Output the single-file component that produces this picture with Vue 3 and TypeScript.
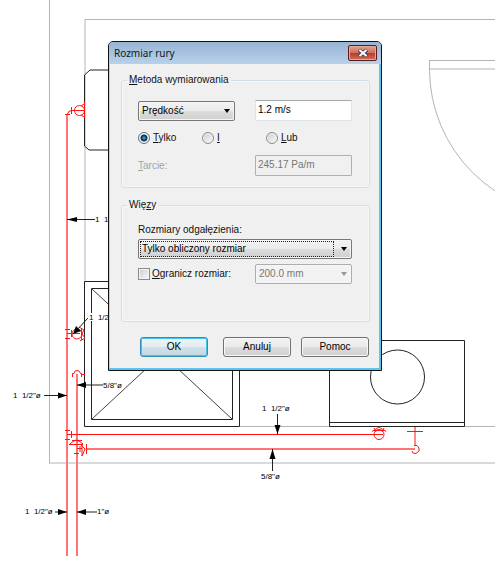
<script setup lang="ts">
import { ref } from 'vue'

interface Note {
  x: number
  y: number
  text: string
}

const notes: Note[] = [
  { x: 95, y: 222, text: '1\u00a0\u00a01/2"ø' },
  { x: 89, y: 320, text: '1\u00a0\u00a01/2"ø' },
  { x: 103, y: 388, text: '5/8"ø' },
  { x: 13, y: 398, text: '1\u00a0\u00a01/2"ø' },
  { x: 262, y: 411, text: '1\u00a0\u00a01/2"ø' },
  { x: 261, y: 479, text: '5/8"ø' },
  { x: 25, y: 514, text: '1\u00a0\u00a01/2"ø' },
  { x: 97, y: 514, text: '1"ø' }
]

const method = ref('Prędkość')
const velocity = ref('1.2 m/s')
const mode = ref('only')
const friction = ref('245.17 Pa/m')
const branch = ref('Tylko obliczony rozmiar')
const limited = ref(false)
const limit = ref('200.0 mm')
</script>

<template>
  <main class="workspace">
    <svg class="plan" aria-hidden="true">
      <g class="wall">
        <path d="M49.5 0V463" />
        <line x1="49" y1="463" x2="100%" y2="463" />
        <path d="M85 282V19.5" />
        <line x1="85" y1="19.5" x2="100%" y2="19.5" />
        <line x1="240" y1="426.5" x2="100%" y2="426.5" />
        <path d="M429.5 60V70A146 146 0 0 0 575 215M429 60.5H575M429 69H575" />
      </g>
      <g class="fixture">
        <path d="M110 70H90L84.500 75V146L89 150H110" />
        <path d="M84.500 281.500H239.500V426.500H84.500Z" />
        <path d="M91.500 288.500H232.500V419.500H91.500Z" />
        <path class="thin" d="M92 289L162 354L232 419M92 419L162 354L232 289" />
        <path d="M329.500 340.500H464.500V426.500H329.500ZM329.500 422.500H464.500" />
        <circle cx="397.500" cy="377" r="27" />
      </g>
      <g class="pipe-soft">
        <path d="M67 114V556" />
        <path d="M77 374V556" />
        <path d="M86 449H415" />
      </g>
      <g class="pipe">
        <path d="M67 434.500H383" />
        <path d="M65 114.500H70M67.500 114Q68 110.500 72 110.500H84M71.500 107V114" />
        <circle cx="79.500" cy="110.500" r="5" />
        <path d="M84.500 102V118M81 106L84 104M81 115L84 117" />
        <path d="M65 329.500H70M65 338.500H70M67 333.500H80M71.500 330V337" />
        <circle cx="77" cy="334" r="5" />
        <path d="M79 327L84 330L82 334L85 338L80 341M81.500 329V340" />
        <path d="M72.500 377V373.500H74Q74 370.500 77 370.500Q80 370.500 80.500 373.500H81.500V377M81 374.500H85" />
        <path d="M65 430.500H70M65 439.500H70M71.500 431V438" />
        <path d="M72 440.500H82M69 444.500H83M70 444Q73 441 76 440Q80 441 83 444M74 453.500H79M77 448.500H82" />
        <path d="M81 445L85 449L82 456V444M80 446V452M86.500 444V454" />
        <circle cx="379" cy="434.500" r="5" />
        <path d="M372 431.500L379 427L386 431.500M374 430.500H384M374 428L376 432M384 428L382 432" />
        <path d="M415 427V445M407 431.500H423M414 445.500H417L419 448V451L416 453.500L413 453L412 451" />
      </g>
      <g class="leader">
        <path d="M67 219.500H95M88 318L74 333M77 385H103M44 395.500H67M277.500 414V434M272.500 471V449M55 512H67M77 512H97" />
        <path class="head" d="M67 219.500L77 217V222ZM73 334L76 326L81 331ZM77 385L86 382V388ZM67 395.500L58 392.500V398.500ZM277.500 434L274.500 425H280.500ZM272.500 449L269.500 459H275.500ZM67 512L58 509V515ZM77 512L86 509V515Z" />
      </g>
      <rect class="mask" x="88" y="313" width="20" height="8" />
      <text v-for="(note, i) in notes" :key="i" class="note" :x="note.x" :y="note.y">{{ note.text }}</text>
    </svg>

    <section class="dialog" role="dialog" aria-labelledby="dialog-title">
      <header class="titlebar">
        <h1 id="dialog-title">Rozmiar rury</h1>
        <button class="close" type="button" aria-label="Zamknij">
          <svg width="12" height="10" viewBox="0 0 12 10">
            <path d="M2 2L10 8M10 2L2 8" stroke="#4b4350" stroke-width="4" />
            <path d="M2.500 2L9.500 8M9.500 2L2.500 8" stroke="#fff" stroke-width="2" />
          </svg>
        </button>
      </header>

      <form class="body" @submit.prevent>
        <fieldset class="method">
          <legend><u>M</u>etoda wymiarowania</legend>
          <span class="combo">
            <select v-model="method" aria-label="Metoda wymiarowania">
              <option>Prędkość</option>
            </select>
            <svg class="arrow" width="6" height="4" viewBox="0 0 6 4"><path d="M0 0H6L3 4Z" /></svg>
          </span>
          <input v-model="velocity" class="field" type="text" aria-label="Prędkość" />
          <div class="radios">
            <label><input v-model="mode" type="radio" name="mode" value="only" /><span><u>T</u>ylko</span></label>
            <label><input v-model="mode" type="radio" name="mode" value="and" /><span><u>I</u></span></label>
            <label><input v-model="mode" type="radio" name="mode" value="or" /><span><u>L</u>ub</span></label>
          </div>
          <label class="muted" for="friction"><u>T</u>arcie:</label>
          <input id="friction" v-model="friction" class="field" type="text" disabled />
        </fieldset>

        <fieldset class="limits">
          <legend>Wię<u>z</u>y</legend>
          <label class="caption" for="branch">Rozmiary odgałęzienia:</label>
          <span class="combo wide current">
            <select id="branch" v-model="branch">
              <option>Tylko obliczony rozmiar</option>
            </select>
            <svg class="arrow" width="6" height="4" viewBox="0 0 6 4"><path d="M0 0H6L3 4Z" /></svg>
          </span>
          <label class="check"><input v-model="limited" type="checkbox" /><span><u>O</u>granicz rozmiar:</span></label>
          <span class="combo off">
            <select v-model="limit" :disabled="!limited" aria-label="Ogranicz rozmiar">
              <option>200.0 mm</option>
            </select>
            <svg class="arrow" width="6" height="4" viewBox="0 0 6 4"><path d="M0 0H6L3 4Z" /></svg>
          </span>
        </fieldset>

        <footer class="actions">
          <button class="push primary" type="submit">OK</button>
          <button class="push" type="button">Anuluj</button>
          <button class="push" type="button">Pomoc</button>
        </footer>
      </form>
    </section>
  </main>
</template>

<style>
body {
  background: #fff;
}
</style>

<style scoped>
* {
  box-sizing: border-box;
}

.workspace {
  position: relative;
  min-height: 100vh;
  overflow: hidden;
  font: 10px/12px "Liberation Sans", Arial, sans-serif;
  color: #111;
}

.plan {
  position: absolute;
  inset: 0;
  width: 100%;
  height: 100%;
  fill: none;
}

.wall {
  stroke: #b4b4b4;
}

.fixture {
  stroke: #222;
}

.thin {
  stroke: #444;
  stroke-width: 1;
}

.pipe {
  stroke: #ff1414;
}

.pipe-soft {
  stroke: #ff7474;
  stroke-width: 2;
}

.leader {
  stroke: #222;
}

.head {
  fill: #000;
  stroke: none;
}

.mask {
  fill: #fff;
}

.note {
  font: 8px "Liberation Sans", Arial, sans-serif;
  fill: #000;
}

.dialog {
  position: absolute;
  left: 108px;
  top: 41px;
  width: 274px;
  border: 1px solid #111;
  border-radius: 5px 5px 0 0;
  background: #f0f0f0;
  box-shadow: inset -2px -2px 0 #5cc5ee, inset 1px 0 0 #b9d1ea;
}

.titlebar {
  display: flex;
  align-items: center;
  justify-content: space-between;
  height: 22px;
  padding: 0 4px 0 5px;
  border-radius: 4px 4px 0 0;
  background: linear-gradient(#98b4d3, #b9d1ea);
}

h1 {
  margin: 0;
  font: 10px/16px "Noto Sans", "Open Sans", sans-serif;
  color: #101820;
}

.close {
  display: flex;
  align-items: center;
  justify-content: center;
  width: 29px;
  height: 16px;
  padding: 0;
  border: 1px solid #571c1c;
  border-radius: 2px;
  background: linear-gradient(#e2a08f 0%, #d0705c 48%, #b93a24 50%, #d0705a 100%);
  box-shadow: inset 0 0 0 1px #e6a799;
}

.body {
  padding: 10px 11px 13px 12px;
}

fieldset {
  display: grid;
  grid-template-columns: 117px 1fr;
  min-width: 0;
  margin: 0;
  border: 1px solid #d3dfe8;
  border-radius: 3px;
  box-shadow: inset 0 0 0 1px #f8f8f8;
}

legend {
  height: 12px;
  margin-left: -11px;
  padding: 0 2px;
}

.method {
  padding: 14px 17px 11px 16px;
  row-gap: 11px;
}

.limits {
  margin-top: 11px;
  padding: 13px 17px 37px 16px;
}

.combo {
  position: relative;
  display: block;
  height: 20px;
}

.method .combo {
  width: 97px;
  align-self: end;
}

.wide,
.caption {
  grid-column: 1 / -1;
}

.caption {
  margin-bottom: 3px;
}

.wide {
  margin-bottom: 5px;
}

select {
  appearance: none;
  width: 100%;
  height: 20px;
  padding: 0 18px 0 3px;
  border: 1px solid #777;
  border-radius: 2px;
  background: linear-gradient(#f3f3f3 0%, #ebebeb 49%, #dddddd 51%, #cfcfcf 100%);
  box-shadow: inset 0 0 0 1px #f6f6f6;
  font: inherit;
  color: #000;
}

.arrow {
  position: absolute;
  right: 5px;
  top: 8px;
  fill: #000;
  pointer-events: none;
}

.current::after {
  content: "";
  position: absolute;
  inset: 2px 18px 2px 2px;
  border: 1px dotted #222;
  pointer-events: none;
}

.off select {
  border-color: #adadad;
  background: #f3f3f3;
  color: #777;
  opacity: 1;
}

.off .arrow {
  fill: #999;
}

.field {
  width: 100%;
  min-width: 0;
  height: 21px;
  padding: 0 2px 2px;
  border: 1px solid #dfe3ea;
  border-top-color: #a5a7ae;
  border-radius: 1px;
  background: #fff;
  font: inherit;
  color: #000;
}

.field:disabled {
  border-color: #b0b0b0;
  background: #f0f0f0;
  color: #777;
}

.radios {
  grid-column: 1 / -1;
  display: grid;
  grid-template-columns: 64px 64px 1fr;
  height: 12px;
}

.radios label,
.check {
  display: flex;
  align-items: center;
  gap: 3px;
}

.check {
  gap: 2px;
}

input[type="radio"],
input[type="checkbox"] {
  appearance: none;
  flex: none;
  width: 12px;
  height: 12px;
  margin: 0;
  border: 1px solid #8a8b8c;
  background: linear-gradient(135deg, #c9cdd1, #fafafa);
  box-shadow: inset 0 0 0 1px #f4f4f4;
}

input[type="radio"] {
  border-radius: 50%;
}

input[type="radio"]:checked {
  border-color: #6c7074;
  background: radial-gradient(circle at 50% 50%, #58bde6 0, #134a74 2px, #0c3151 3px, #e8eef2 4px);
}

input[type="checkbox"]:checked {
  background: #134a74;
}

.muted {
  align-self: center;
  color: #a3a3a3;
}

.actions {
  display: flex;
  justify-content: flex-end;
  gap: 10px;
  margin-top: 15px;
  padding-right: 1px;
}

.push {
  width: 68px;
  height: 20px;
  padding: 0;
  border: 1px solid #707070;
  border-radius: 3px;
  background: linear-gradient(#f2f2f2 0%, #ebebeb 49%, #dddddd 51%, #cfcfcf 100%);
  box-shadow: inset 0 0 0 1px #f8f8f8;
  font: inherit;
  color: #000;
}

.primary {
  margin-right: 5px;
  border-color: #2f8fb5;
  background: linear-gradient(#eef3f6 0%, #e3edf2 49%, #d0e0e8 51%, #c3d8e2 100%);
  box-shadow: inset 0 0 0 1px #45c4ee;
}
</style>
